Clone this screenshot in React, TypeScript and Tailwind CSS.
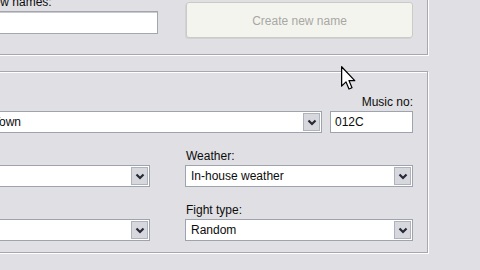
import React from 'react';

// Classic XP-era dialog, cropped: "New names" group and the map header group below it

const Chevron: React.FC = () => (
  <svg width="10" height="7" viewBox="0 0 10 7">
    <path d="M1.5 1.5 L5 5 L8.5 1.5" fill="none" stroke="#262a36" strokeWidth="2.2" />
  </svg>
);

const Combo: React.FC<{ value?: string; width: string; textPad?: string }> = ({ value = '', width, textPad = 'pl-[5px]' }) => (
  <div className={`${width} h-[22px] flex items-stretch bg-white border border-[#9ea4ae]`}>
    <span className={`flex-1 flex items-center ${textPad} whitespace-nowrap overflow-hidden`}>{value}</span>
    <div className="m-[1px] w-[17px] flex items-center justify-center bg-[#d7d8de] border border-[#aeb2bc]">
      <Chevron />
    </div>
  </div>
);

const App: React.FC = () => {
  return (
    <div className="relative w-[480px] h-[270px] overflow-hidden bg-[#e0e0e4] text-[12px] leading-[14px] text-[#0c0c0c] font-['Liberation_Sans',Arial,sans-serif]">
      <div className="-ml-[30px] -mt-[30px]">
        {/* New names group */}
        <div className="w-[458px] border border-[#a7a7b0] shadow-[inset_1px_1px_0_#fff,1px_1px_0_#fff] pt-[24px] pl-[12px] pb-[16px] flex items-start">
          <div className="flex flex-col w-[175px]">
            <span className="pl-[2px] whitespace-nowrap">New names:</span>
            <div className="mt-[2px] h-[23px] w-[175px] bg-white border border-[#a3a6ad] shadow-[inset_0_1px_0_#c8cace]" />
          </div>
          <button
            disabled
            className="ml-[28px] mt-[7px] w-[227px] h-[36px] rounded-[3px] bg-[#f4f4ef] border border-[#cbcbc4] shadow-[-1px_1px_0_#d2d2d6] text-[#a8a8a3] pt-[2px]"
          >
            Create new name
          </button>
        </div>

        {/* Header group */}
        <div className="mt-[16px] w-[458px] border border-[#a7a7b0] shadow-[inset_1px_1px_0_#fff,1px_1px_0_#fff] pt-[23px] pl-[12px] pb-[11px] flex flex-col">
          <div className="flex items-end">
            <Combo value="Town" width="w-[339px]" textPad="pl-[9px]" />
            <div className="ml-[8px] w-[83px] flex flex-col">
              <span className="text-right whitespace-nowrap">Music no:</span>
              <div className="mt-[2px] h-[22px] bg-white border border-[#9ea4ae] flex items-center pl-[4px]">012C</div>
            </div>
          </div>

          <div className="mt-[16px] flex items-end">
            <Combo width="w-[167px]" />
            <div className="ml-[35px] w-[228px] flex flex-col">
              <span className="pl-[1px]">Weather:</span>
              <div className="mt-[2px]">
                <Combo value="In-house weather" width="w-[228px]" />
              </div>
            </div>
          </div>

          <div className="mt-[16px] flex items-end">
            <Combo width="w-[167px]" />
            <div className="ml-[35px] w-[228px] flex flex-col">
              <span className="pl-[1px]">Fight type:</span>
              <div className="mt-[2px]">
                <Combo value="Random" width="w-[228px]" />
              </div>
            </div>
          </div>
        </div>
      </div>

      {/* mouse pointer */}
      <svg className="absolute left-[341px] top-[66px]" width="15" height="24" viewBox="0 0 12 19">
        <path d="M0.5 0.5 L0.5 16 L4 12.6 L6.4 18.3 L8.8 17.3 L6.4 11.6 L11 11.6 Z" fill="#fff" stroke="#000" strokeWidth="1" strokeLinejoin="round" />
      </svg>
    </div>
  );
};

export default App;
